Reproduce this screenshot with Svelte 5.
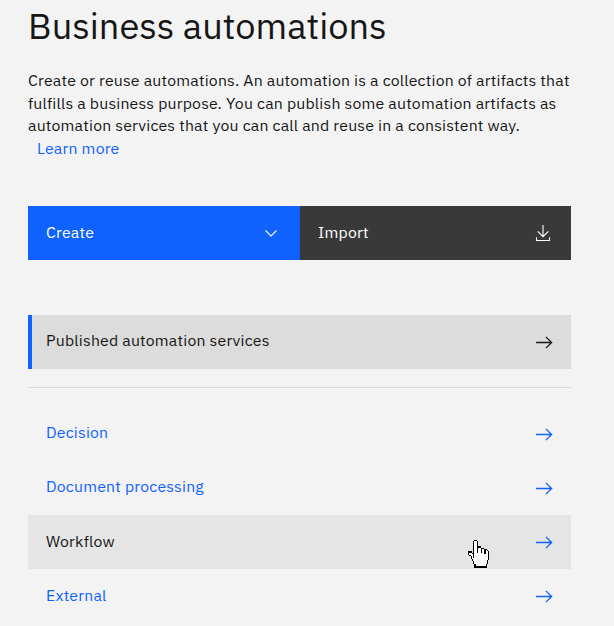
<script>
  const links = [
    { label: 'Decision', cls: 'decision' },
    { label: 'Document processing', cls: 'document' },
    { label: 'Workflow', cls: 'workflow', hovered: true },
    { label: 'External', cls: 'external' }
  ];

  // Hand pointer: # outline, o fill
  const hand = [
    '.....##..........',
    '....#oo#.........',
    '....#oo#.........',
    '....#oo#.........',
    '....#oo#.........',
    '....#oo###.......',
    '....#oo#oo###....',
    '....#oo#oo#oo##..',
    '....#oo#oo#oo#o#.',
    '###.#oo#oo#oo#oo#',
    '#oo##oooooooo#oo#',
    '#ooo#ooooooooooo#',
    '.#oo#ooooooooooo#',
    '..#o#ooooooooooo#',
    '..#ooooooooooooo#',
    '...#oooooooooooo#',
    '...#ooooooooooo#.',
    '....#oooooooooo#.',
    '....#oooooooooo#.',
    '.....#oooooooo#..',
    '.....#oooooooo#..',
    '.....##########..'
  ];
  const pixels = (mark) =>
    hand
      .map((row, y) => [...row].map((c, x) => (c === mark ? `M${x} ${y}h1v1h-1z` : '')).join(''))
      .join('');
</script>

{#snippet arrow()}
  <svg class="arrow" width="21" height="21" viewBox="0 0 20 20" aria-hidden="true">
    <path d="M11.8 4.2 10.93 5.04 15.15 9.37H2v1.26h13.15l-4.22 4.3.87.87L17.7 10z" />
  </svg>
{/snippet}

<main>
  <h1><span>Business automations</span></h1>
  <div class="intro">
    <p class="l1">Create or reuse automations. An automation is a collection of artifacts that</p>
    <p class="l2">fulfills a business purpose. You can publish some automation artifacts as</p>
    <p class="l3">automation services that you can call and reuse in a consistent way.</p>
    <a class="learn">Learn more</a>
  </div>

  <div class="actions">
    <button class="create">
      <span>Create</span>
      <svg width="16" height="16" viewBox="0 0 16 16" aria-hidden="true">
        <path d="M2.5 5.5 8 11l5.5-5.5" fill="none" stroke="#fff" stroke-width="1.1" />
      </svg>
    </button>
    <button class="import">
      <span>Import</span>
      <svg width="20" height="20" viewBox="0 0 20 20" aria-hidden="true">
        <path d="M10 2v11.5M4.7 8.4 10 13.7l5.3-5.3M3.5 14.3v3.2h13v-3.2" fill="none" stroke="#fff" stroke-width="1.1" />
      </svg>
    </button>
  </div>

  <a class="row published"><span>Published automation services</span>{@render arrow()}</a>
  <hr />
  <nav>
    {#each links as link}
      <a class="row {link.cls}" class:hovered={link.hovered}>
        <span>{link.label}</span>
        {@render arrow()}
        {#if link.hovered}
          <svg class="pointer" viewBox="0 0 17 22" preserveAspectRatio="none" shape-rendering="crispEdges" aria-hidden="true">
            <path d={pixels('o')} fill="#fff" />
            <path d={pixels('#')} fill="#000" />
          </svg>
        {/if}
      </a>
    {/each}
  </nav>
</main>

<style>
  :global(body) {
    margin: 0;
    background: #f3f3f3;
    overflow: hidden;
  }
  main {
    box-sizing: border-box;
    width: 614px;
    height: 626px;
    padding: 0 43px 0 28px;
    overflow: hidden;
    background: #f3f3f3;
    color: #161616;
    font: 400 15.84px/22.6px 'IBM Plex Sans', 'Noto Sans', sans-serif;
    letter-spacing: 0.195px;
  }
  h1 {
    height: 53px;
    margin: 0;
    font-size: 36.2px;
    font-weight: 400;
    line-height: 51px;
    letter-spacing: 0;
    white-space: nowrap;
  }
  .intro {
    height: 137px;
    padding-top: 16px;
    white-space: nowrap;
  }
  p {
    margin: 0;
  }
  .learn {
    margin-left: 9px;
    color: #0f62fe;
  }
  .actions {
    display: flex;
    height: 54px;
    margin-bottom: 55px;
  }
  button {
    display: flex;
    align-items: center;
    justify-content: space-between;
    padding: 0 18px;
    border: 0;
    font: inherit;
    letter-spacing: inherit;
    color: #fff;
  }
  button span {
    margin-top: -2px;
  }
  .create {
    width: 272px;
    padding-right: 21px;
    background: #0f62fe;
  }
  .import {
    flex: 1;
    background: #393939;
  }
  .row {
    position: relative;
    display: flex;
    align-items: center;
    justify-content: space-between;
    box-sizing: border-box;
    height: 54.15px;
    padding: 0 16.5px 0 18px;
    color: #0f62fe;
  }
  .row > span {
    margin-top: -2.9px;
  }
  .published {
    height: 54px;
    padding-left: 14px;
    border-left: 4px solid #0f62fe;
    background: #dcdcdc;
    color: #161616;
  }
  .arrow {
    fill: currentColor;
  }
  hr {
    height: 1px;
    margin: 18px 0 19px;
    border: 0;
    background: #dcdcdc;
  }
  .hovered {
    background: #e5e5e5;
  }
  .hovered span {
    color: #161616;
  }
  .pointer {
    position: absolute;
    left: 440px;
    top: 25px;
    width: 21.25px;
    height: 27.5px;
  }
</style>
